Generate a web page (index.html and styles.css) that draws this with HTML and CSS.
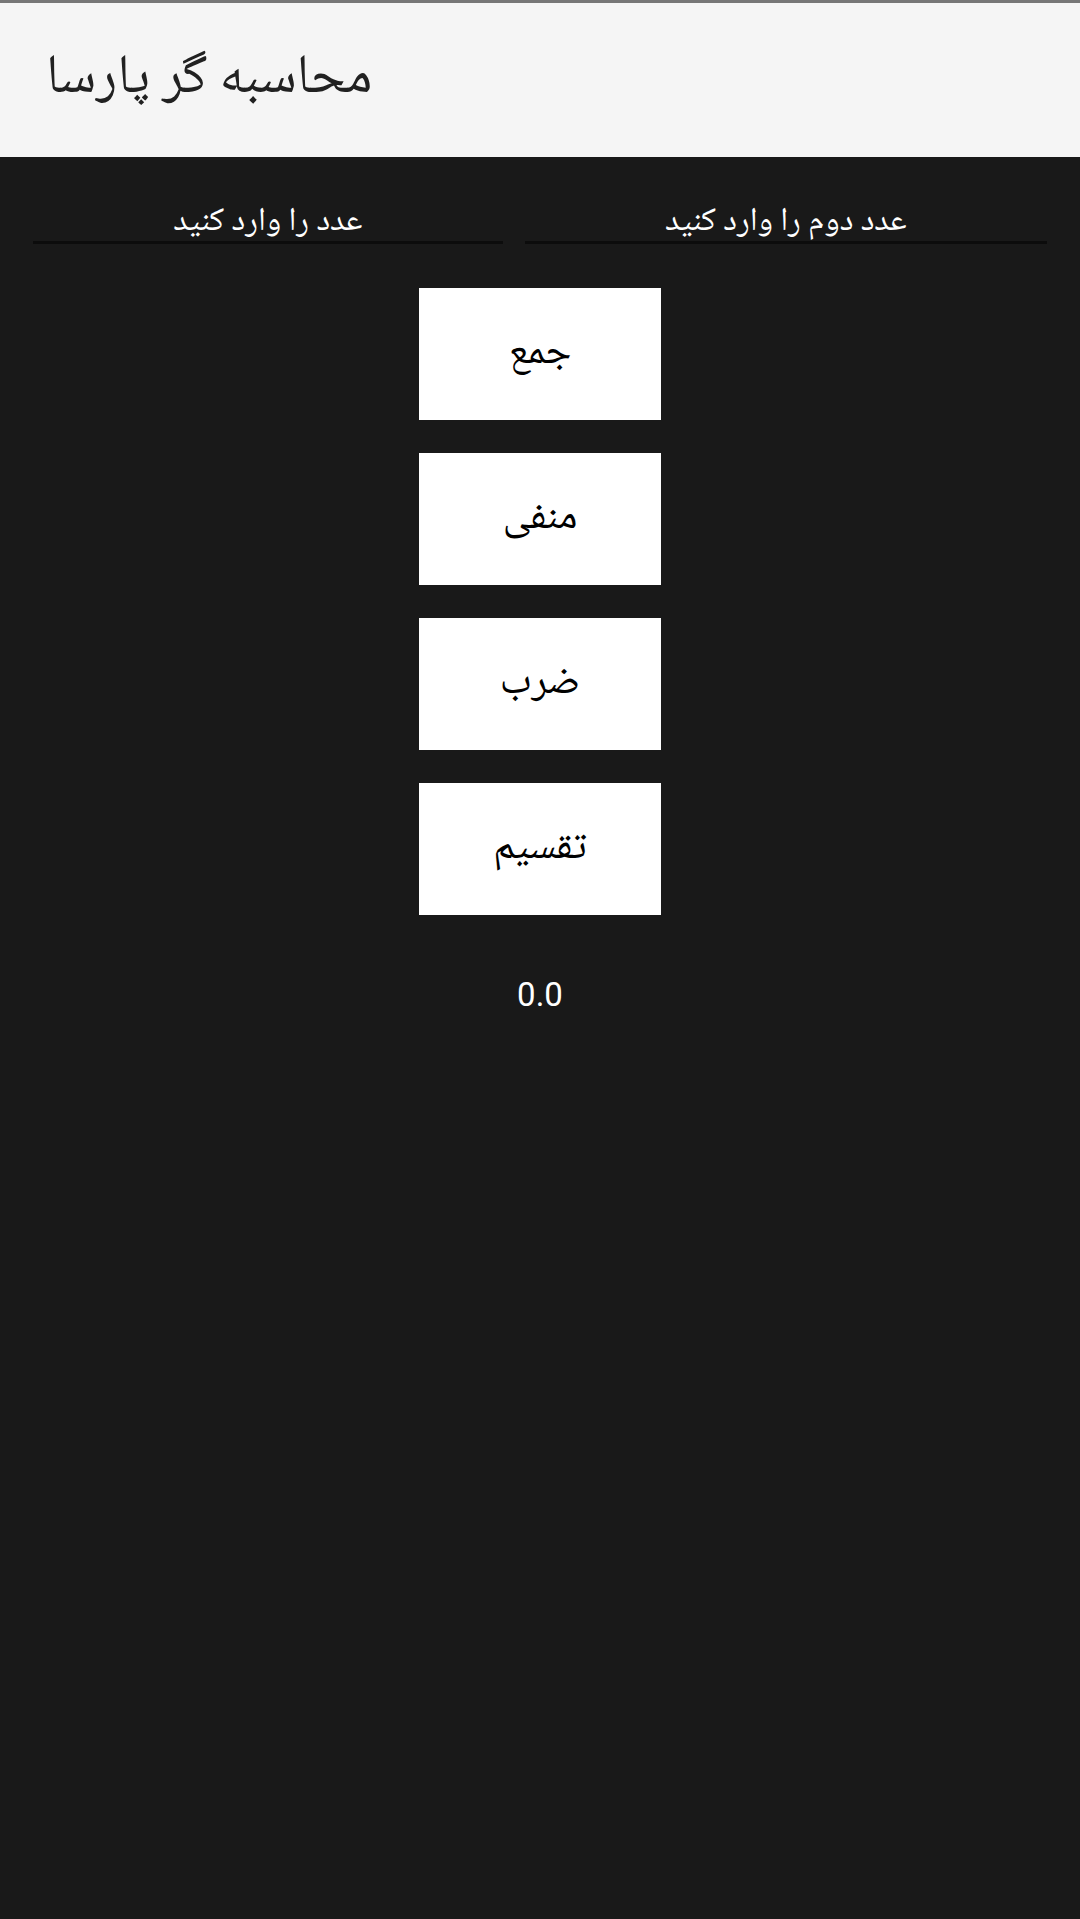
FILE: index.html
```html
<!DOCTYPE html>
<html lang="fa">
<head>
<meta charset="utf-8">
<title>محاسبه گر پارسا</title>
<link rel="stylesheet" href="styles.css">
</head>
<body>
<div class="status"></div>
<header class="appbar">
  <h1 class="title">محاسبه گر پارسا</h1>
</header>
<main class="content">
  <div class="fields">
    <div class="field"><span class="hint">عدد را وارد کنید</span></div>
    <div class="field"><span class="hint">عدد دوم را وارد کنید</span></div>
  </div>
  <div class="buttons">
    <button class="btn">جمع</button>
    <button class="btn">منفی</button>
    <button class="btn">ضرب</button>
    <button class="btn">تقسیم</button>
  </div>
  <div class="result">0.0</div>
</main>
</body>
</html>
```

FILE: styles.css
```css
html, body {
  margin: 0;
  padding: 0;
  height: 100%;
}
body {
  background: #191919;
  font-family: "Noto Naskh Arabic", "Noto Sans Arabic", "DejaVu Sans", sans-serif;
}
.status {
  height: 3px;
  background: #777777;
}
.appbar {
  height: 154px;
  background: #f5f5f5;
  display: flex;
  align-items: center;
  padding: 0 46px;
}
.title {
  margin: 0;
  font-weight: normal;
  font-size: 55px;
  color: #212121;
  direction: rtl;
}
.content {
  display: flex;
  flex-direction: column;
  align-items: center;
}
.fields {
  display: flex;
  gap: 22px;
  padding: 0 33px;
  margin-top: 42px;
  align-self: stretch;
}
.field {
  flex: 1 1 auto;
  text-align: center;
  border-bottom: 3px solid #0c0c0c;
  height: 36px;
  padding-top: 6px;
  line-height: 36px;
}
.hint {
  color: #ffffff;
  font-size: 33px;
  direction: rtl;
  unicode-bidi: isolate;
}
.buttons {
  display: flex;
  flex-direction: column;
  gap: 33px;
  margin-top: 44px;
}
.btn {
  width: 242px;
  height: 132px;
  border: none;
  border-radius: 0;
  background: #ffffff;
  color: #000000;
  font-family: inherit;
  font-size: 41px;
  padding: 0;
}
.result {
  margin-top: 60px;
  color: #ffffff;
  font-family: Roboto, "Liberation Sans", sans-serif;
  font-size: 33px;
}
```
